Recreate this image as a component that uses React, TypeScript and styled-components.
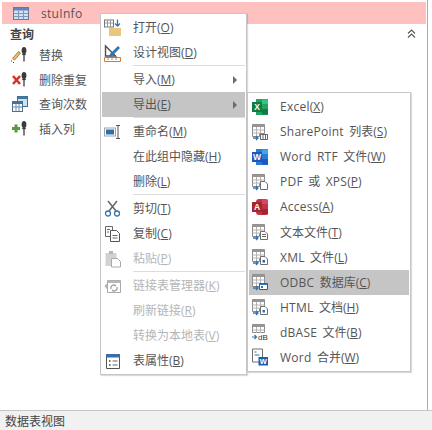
import styled, { createGlobalStyle } from 'styled-components'
import type { ReactNode } from 'react'

const GlobalStyle = createGlobalStyle`
  html, body {
    margin: 0;
    padding: 0;
    background: #fff;
  }
  body {
    font-family: "Open Sans", "Noto Sans CJK SC", sans-serif;
    font-size: 12px;
    color: #555;
  }
`

const Window = styled.div`
  width: 432px;
  height: 430px;
  display: flex;
  flex-direction: column;
  overflow: hidden;
`

const Main = styled.div`
  position: relative;
  flex: 1;
  padding: 2px 0 0 2px;
  border-right: 1px solid #ababab;
  margin-right: 4px;
`

const TableRow = styled.div`
  height: 22px;
  background: #ffc0c0;
  display: flex;
  align-items: center;
  gap: 12px;
  padding-left: 11px;
  margin-right: 1px;
  letter-spacing: 0.3px;
`

const GroupHeader = styled.div`
  height: 19px;
  display: flex;
  align-items: center;
  justify-content: space-between;
  padding: 0 11px 0 8px;
  font-weight: 700;
  color: #444;
`

const ObjectList = styled.div`
  display: flex;
  flex-direction: column;
`

const ObjectRow = styled.div`
  height: 24.5px;
  display: flex;
  align-items: center;
  gap: 10px;
  padding-left: 9px;
`

const Menu = styled.div<{ $left: number; $top: number; $width: number }>`
  position: absolute;
  left: ${({ $left }) => $left}px;
  top: ${({ $top }) => $top}px;
  width: ${({ $width }) => $width}px;
  box-sizing: border-box;
  background: #fff;
  border: 1px solid #c6c6c6;
  box-shadow: 1px 1px 1px rgba(0, 0, 0, 0.14);
  padding: 1px;
`

const Item = styled.div<{ $active?: boolean; $disabled?: boolean }>`
  height: 25px;
  display: flex;
  align-items: center;
  background: ${({ $active }) => ($active ? '#c5c5c5' : 'transparent')};
  color: ${({ $disabled }) => ($disabled ? '#b5b5b5' : '#555')};
`

const SubItem = styled(Item)`
  height: 25.1px;
`

const IconSlot = styled.span<{ $width: number }>`
  width: ${({ $width }) => $width}px;
  flex-shrink: 0;
  display: flex;
  align-items: center;
  padding-left: 2px;
  box-sizing: border-box;
`

const Label = styled.span`
  flex: 1;
  white-space: nowrap;
  padding-bottom: 1px;
`

const Latin = styled.span`
  letter-spacing: 0.25px;
  word-spacing: 2px;
`

const Accel = styled.span`
  text-decoration: underline;
`

const Arrow = styled.span`
  width: 0;
  height: 0;
  margin-right: 8px;
  border-style: solid;
  border-width: 4px 0 4px 4px;
  border-color: transparent transparent transparent #6a6a6a;
`

const Separator = styled.div`
  height: 1px;
  margin: 0 0 1px 31px;
  background: #dcdcdc;
`

const StatusBar = styled.div`
  height: 20px;
  flex-shrink: 0;
  box-sizing: border-box;
  display: flex;
  align-items: center;
  padding-left: 5px;
  background: #f1f1f1;
  border-top: 1px solid #c6c6c6;
  color: #444;
`

const Icon = ({ children, size = 18 }: { children: ReactNode; size?: number }) => (
  <svg width={size} height={size} viewBox="0 0 18 18" fill="none">
    {children}
  </svg>
)

const TableBase = () => (
  <>
    <path d="M1.5 1.5h12v9h-5v3h-7z" fill="#fff" stroke="#8a8a8a" />
    <path d="M1.5 1.5h12v2.5h-12z" fill="#969696" />
    <path d="M5.5 4v9M9.5 4v6M1.5 7h12M1.5 10h7" stroke="#b4b4b4" />
    <path d="M2 15h4.5M5 13l2 2-2 2" stroke="#2e75b6" strokeWidth="1.3" />
  </>
)

const ExportIcon = ({ children }: { children?: ReactNode }) => (
  <Icon>
    <TableBase />
    {children}
  </Icon>
)

const PageBadge = ({ dot }: { dot?: string }) => (
  <>
    <path d="M9.5 8.5h4.5l2.5 2.5v5.5h-7z" fill="#fff" stroke="#6f6f6f" />
    {dot ? <rect x="11.5" y="12" width="2.5" height="2.5" fill={dot} /> : null}
  </>
)

const PinGlyph = () => (
  <>
    <ellipse cx="13" cy="4.5" rx="2.4" ry="3.5" fill="#3b3b3b" />
    <path d="M13 7v8.5" stroke="#3b3b3b" strokeWidth="1.3" />
    <path d="M11.2 8.5h3.6" stroke="#3b3b3b" strokeWidth="1.2" />
  </>
)

const StuInfoIcon = () => (
  <svg width="16" height="13" viewBox="0 0 16 13">
    <rect x="0.5" y="0.5" width="15" height="12" fill="#d4e1f2" stroke="#64799c" />
    <rect x="1" y="1" width="14" height="2.5" fill="#5f86bd" />
    <path d="M5.5 3.5v9M10.5 3.5v9M1 6.5h14M1 9.5h14" stroke="#7f97bd" />
  </svg>
)

const ChevronsUp = () => (
  <svg width="9" height="9" viewBox="0 0 9 9" fill="none" stroke="#555" strokeWidth="1.1">
    <path d="M1 4.5L4.5 1 8 4.5M1 8.5L4.5 5 8 8.5" />
  </svg>
)

const ReplaceIcon = () => (
  <Icon>
    <path d="M1.5 12.5l6-7 2 1.5-6 7z" fill="#e9c46a" stroke="#a65b24" strokeWidth="0.8" />
    <path d="M0 15h1M2 16.5h1" stroke="#333" />
    <PinGlyph />
  </Icon>
)

const RemoveDupIcon = () => (
  <Icon>
    <path d="M2 5l7 8M9 5l-7 8" stroke="#d9342b" strokeWidth="2.6" />
    <PinGlyph />
  </Icon>
)

const TotalsIcon = () => (
  <Icon>
    <rect x="6.5" y="1.5" width="10" height="10" fill="#cfe0ef" stroke="#3e6f90" />
    <rect x="6.5" y="1.5" width="10" height="2.5" fill="#3e7c9e" />
    <rect x="1.5" y="6.5" width="10" height="10" fill="#fff" stroke="#51708f" />
    <rect x="1.5" y="6.5" width="10" height="2.5" fill="#45709a" />
    <path d="M5 9v7M8 9v7M2 12h9" stroke="#6d8aa8" />
  </Icon>
)

const InsertIcon = () => (
  <Icon>
    <path d="M5 4.5v8M1 8.5h8" stroke="#5b9a3c" strokeWidth="3" />
    <PinGlyph />
  </Icon>
)

const OpenIcon = () => (
  <Icon>
    <rect x="0.5" y="1" width="9" height="7" fill="#fff" stroke="#777" />
    <path d="M3.5 1v7M6.5 1v7M1 4h8" stroke="#999" />
    <path d="M13.5 0.5v6M11 4.5l2.5 2.5 2.5-2.5" stroke="#2e75b6" strokeWidth="1.3" />
    <path d="M5 9h12v8H5z" fill="#eac77f" />
  </Icon>
)

const DesignIcon = () => (
  <Icon>
    <path d="M1.5 2v10h10z" fill="none" stroke="#4f4f4f" strokeWidth="1.4" />
    <path d="M6 10l8-8 2 2-8 8-3 1z" fill="#2e75b6" />
    <path d="M0.5 13.5h16v4h-16z" fill="#fff" stroke="#d9782d" />
    <path d="M4 14v2M8 14v2M12 14v2" stroke="#d9782d" />
  </Icon>
)

const RenameIcon = () => (
  <Icon>
    <rect x="0.5" y="5" width="11" height="8" fill="#fff" stroke="#9aa5b0" />
    <rect x="2" y="6.5" width="8" height="5" fill="#2f6fa8" />
    <path d="M12 2.5h4M12 15.5h4M14 2.5v13" stroke="#555" />
  </Icon>
)

const CutIcon = () => (
  <Icon>
    <path d="M4 1l8 10M13 1L5 11" stroke="#666" strokeWidth="1.5" />
    <circle cx="4" cy="13.5" r="2.5" stroke="#3a77b0" strokeWidth="1.3" />
    <circle cx="13" cy="13.5" r="2.5" stroke="#3a77b0" strokeWidth="1.3" />
  </Icon>
)

const CopyIcon = () => (
  <Icon>
    <path d="M1.5 1.5h7v10h-7z" fill="#fff" stroke="#666" />
    <path d="M6.5 5.5h6l3 3v8h-9z" fill="#fff" stroke="#555" />
    <path d="M8.5 10.5h5M8.5 13h5M3 4.5h3M3 7h2" stroke="#666" />
  </Icon>
)

const PasteIcon = () => (
  <Icon>
    <path d="M1.5 3h11v13h-11z" fill="#d2d2d2" />
    <path d="M5 1h4v3H5z" fill="#b5b5b5" />
    <path d="M7.5 8.5h6l3 3v5.5h-9z" fill="#fff" stroke="#aaa" />
  </Icon>
)

const LinkManagerIcon = () => (
  <Icon>
    <path d="M3.5 3.5h13v12h-13z" fill="#fff" stroke="#a9a9a9" />
    <path d="M3.5 3.5h13V6h-13z" fill="#b7b7b7" />
    <path d="M0.5 9l3-3v7z" fill="#b1b1b1" />
    <path d="M7 12a3 3 0 0 1 5-3M13 10a3 3 0 0 1-5 3" stroke="#a0a0a0" strokeWidth="1.3" />
  </Icon>
)

const PropertiesIcon = () => (
  <Icon>
    <path d="M2.5 3.5h13v13h-13z" fill="#fff" stroke="#555" />
    <path d="M2 2h14v3.5H2z" fill="#3a6ea5" />
    <path d="M5 9h1.5M5 13h1.5" stroke="#444" strokeWidth="1.5" />
    <path d="M8.5 9h5M8.5 13h5" stroke="#666" />
  </Icon>
)

const OfficeIcon = ({
  letter,
  colors,
  round = false,
}: {
  letter: string
  colors: [string, string, string]
  round?: boolean
}) => (
  <Icon>
    <rect x="5" y="1" width="12" height="16" rx={round ? 3 : 0} fill={colors[1]} />
    <path d="M11 1.5h6v4.5h-6z" fill={colors[0]} />
    <path d="M11 11h6v5.5h-6z" fill={colors[2]} />
    <rect x="1" y="4" width="10" height="10" fill={colors[2]} />
    <text x="6" y="12" fontSize="8.5" fontWeight="700" fill="#fff" textAnchor="middle" fontFamily="Liberation Sans">
      {letter}
    </text>
  </Icon>
)

const WordMergeIcon = () => (
  <Icon>
    <path d="M1.5 1h10v13h-10z" fill="#fff" stroke="#6f6f6f" />
    <path d="M3.5 4h2M3.5 7h5" stroke="#2e75b6" strokeWidth="1.2" />
    <rect x="7.5" y="9" width="9.5" height="8.5" fill="#1f5cad" />
    <text x="12.2" y="16" fontSize="7.5" fontWeight="700" fill="#fff" textAnchor="middle" fontFamily="Liberation Sans">
      W
    </text>
  </Icon>
)

const DbaseIcon = () => (
  <Icon>
    <path d="M1.5 1.5h12v8h-12z" fill="#fff" stroke="#8a8a8a" />
    <path d="M1.5 1.5h12V4h-12z" fill="#969696" />
    <path d="M5.5 4v6M9.5 4v6M1.5 7h12" stroke="#b4b4b4" />
    <path d="M1 14h4M3.5 12l2 2-2 2" stroke="#2e75b6" strokeWidth="1.2" />
    <text x="12" y="17" fontSize="8" fill="#333" textAnchor="middle" fontFamily="Liberation Sans">
      dB
    </text>
  </Icon>
)

type Entry = {
  label?: string
  accel?: string
  icon?: ReactNode
  arrow?: boolean
  active?: boolean
  disabled?: boolean
  separator?: boolean
}

const contextEntries: Entry[] = [
  { label: '打开', accel: 'O', icon: <OpenIcon /> },
  { label: '设计视图', accel: 'D', icon: <DesignIcon /> },
  { separator: true },
  { label: '导入', accel: 'M', arrow: true },
  { label: '导出', accel: 'E', arrow: true, active: true },
  { separator: true },
  { label: '重命名', accel: 'M', icon: <RenameIcon /> },
  { label: '在此组中隐藏', accel: 'H' },
  { label: '删除', accel: 'L' },
  { separator: true },
  { label: '剪切', accel: 'T', icon: <CutIcon /> },
  { label: '复制', accel: 'C', icon: <CopyIcon /> },
  { label: '粘贴', accel: 'P', icon: <PasteIcon />, disabled: true },
  { separator: true },
  { label: '链接表管理器', accel: 'K', icon: <LinkManagerIcon />, disabled: true },
  { label: '刷新链接', accel: 'R', disabled: true },
  { label: '转换为本地表', accel: 'V', disabled: true },
  { label: '表属性', accel: 'B', icon: <PropertiesIcon /> },
]

const exportEntries: Entry[] = [
  { label: 'Excel', accel: 'X', icon: <OfficeIcon letter="X" colors={['#33c481', '#21a366', '#107c41']} /> },
  {
    label: 'SharePoint 列表',
    accel: 'S',
    icon: (
      <ExportIcon>
        <path d="M9.5 11.5h7v5h-7z" fill="#fff" stroke="#666" />
        <path d="M12 12v4M14.5 12v4" stroke="#666" />
      </ExportIcon>
    ),
  },
  { label: 'Word RTF 文件', accel: 'W', icon: <OfficeIcon letter="W" colors={['#41a5ee', '#2b7cd3', '#185abd']} /> },
  {
    label: 'PDF 或 XPS',
    accel: 'P',
    icon: (
      <ExportIcon>
        <PageBadge />
      </ExportIcon>
    ),
  },
  { label: 'Access', accel: 'A', icon: <OfficeIcon letter="A" round colors={['#d9475b', '#c4314b', '#a4262c']} /> },
  {
    label: '文本文件',
    accel: 'T',
    icon: (
      <ExportIcon>
        <PageBadge />
        <path d="M11 11.5h4M11 13.5h4" stroke="#666" />
      </ExportIcon>
    ),
  },
  {
    label: 'XML 文件',
    accel: 'L',
    icon: (
      <ExportIcon>
        <PageBadge dot="#2e5f9e" />
      </ExportIcon>
    ),
  },
  {
    label: 'ODBC 数据库',
    accel: 'C',
    active: true,
    icon: (
      <ExportIcon>
        <path d="M8.5 10.5h8v6h-8z" fill="#fff" stroke="#555" />
        <path d="M8.5 10.5h8v1.5h-8z" fill="#2e75b6" />
        <rect x="10" y="13" width="2" height="2" fill="#2e75b6" />
      </ExportIcon>
    ),
  },
  {
    label: 'HTML 文档',
    accel: 'H',
    icon: (
      <ExportIcon>
        <PageBadge dot="#2e75b6" />
      </ExportIcon>
    ),
  },
  { label: 'dBASE 文件', accel: 'B', icon: <DbaseIcon /> },
  { label: 'Word 合并', accel: 'W', icon: <WordMergeIcon /> },
]

const objects = [
  { name: '替换', icon: <ReplaceIcon /> },
  { name: '删除重复', icon: <RemoveDupIcon /> },
  { name: '查询次数', icon: <TotalsIcon /> },
  { name: '插入列', icon: <InsertIcon /> },
]

// the original UI font runs wider on latin text, so only those runs get extra spacing
const EntryLabel = ({ label = '', accel }: Entry) => (
  <Label>
    {label.split(/([A-Za-z ]+)/).map((part, index) =>
      index % 2 ? <Latin key={index}>{part}</Latin> : part
    )}
    (<Accel>{accel}</Accel>)
  </Label>
)

export default function App() {
  return (
    <Window>
      <GlobalStyle />
      <Main>
        <TableRow>
          <StuInfoIcon />
          <span>stuInfo</span>
        </TableRow>
        <GroupHeader>
          <span>查询</span>
          <ChevronsUp />
        </GroupHeader>
        <ObjectList>
          {objects.map((object) => (
            <ObjectRow key={object.name}>
              {object.icon}
              <span>{object.name}</span>
            </ObjectRow>
          ))}
        </ObjectList>

        <Menu $left={100} $top={13} $width={147}>
          {contextEntries.map((entry, index) =>
            entry.separator ? (
              <Separator key={index} />
            ) : (
              <Item key={index} $active={entry.active} $disabled={entry.disabled}>
                <IconSlot $width={31}>{entry.icon}</IconSlot>
                <EntryLabel {...entry} />
                {entry.arrow ? <Arrow /> : null}
              </Item>
            )
          )}
        </Menu>

        <Menu $left={247} $top={92} $width={164}>
          {exportEntries.map((entry, index) => (
            <SubItem key={index} $active={entry.active}>
              <IconSlot $width={31}>{entry.icon}</IconSlot>
              <EntryLabel {...entry} />
            </SubItem>
          ))}
        </Menu>
      </Main>
      <StatusBar>数据表视图</StatusBar>
    </Window>
  )
}
